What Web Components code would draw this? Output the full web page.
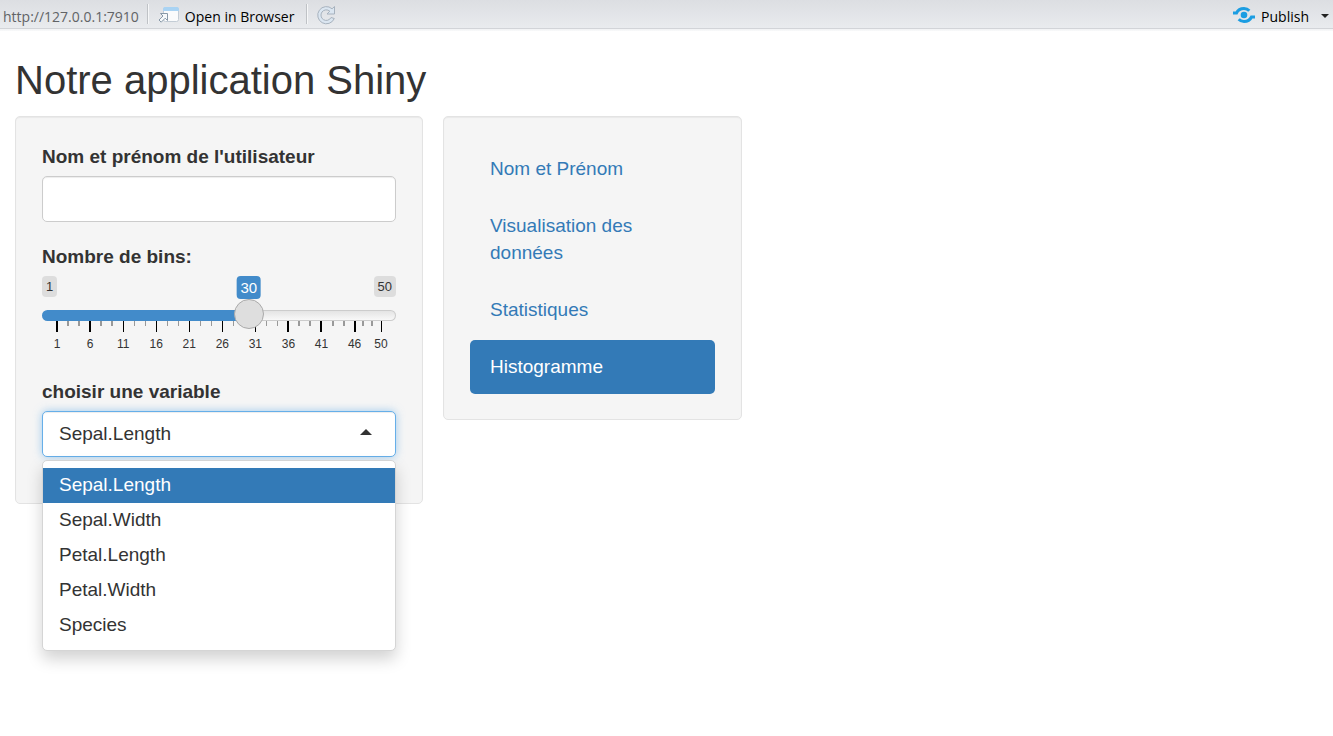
<!DOCTYPE html>
<html lang="fr">
<head>
<meta charset="utf-8">
<meta name="viewport" content="width=device-width, initial-scale=1">
<title>Notre application Shiny</title>
<style>
  html { min-height: 100%; }
  body { margin: 0; background: #fff; color: #333; font: 19px/27px "Liberation Sans", Arial, sans-serif; }
</style>
</head>
<body>
<shiny-app></shiny-app>

<script>
const define = (name, html, setup) => {
  const template = document.createElement('template');
  template.innerHTML = html;
  customElements.define(name, class extends HTMLElement {
    constructor() {
      super();
      this.attachShadow({ mode: 'open' }).append(template.content.cloneNode(true));
    }
    connectedCallback() { if (setup) setup(this, this.shadowRoot); }
  });
};

/* Viewer toolbar with address, browser, reload and publish actions */
define('viewer-toolbar', `
  <style>
    :host { display: flex; align-items: center; box-sizing: border-box; height: 31px; padding: 2px 4px 0 3px;
      background: linear-gradient(#dcdee2, #e9ebee 28px, #d2d4d8 28px, #d2d4d8 29px, #f1f2f4 29px, #f8f9fa);
      font: 14px/20px "Open Sans", "Noto Sans", sans-serif; color: #000; }
    .url { color: #616366; }
    i { width: 1px; height: 20px; margin: 0 9px 5px 8px; background: #bfc2c6; border-right: 1px solid #f6f7f8; }
    i.second { margin: 0 8px 5px 12px; }
    button { display: flex; align-items: center; gap: 6px; padding: 0; border: 0; background: none; font: inherit; color: inherit; }
    svg { display: block; margin-bottom: 3px; }
    .publish { margin-left: auto; }
    .publish .caret { margin: 0 0 0 6px; }
  </style>
  <span class="url">http://127.0.0.1:7910</span>
  <i></i>
  <button type="button">
    <svg width="21" height="18" viewBox="0 0 21 18" aria-hidden="true">
      <rect x="5.500" y="1.500" width="15" height="14" rx="2" fill="#fafbfc" stroke="#c3ccd5"/>
      <path d="M5 5V3q0-2 2-2h12q2 0 2 2v2z" fill="#a9d3f3"/>
      <path d="M2.500 7.500h7v7l-2.300-2.300-4 4-2.200-2.200 4-4z" fill="#f5f8fa" stroke="#8798a8"/>
    </svg>
    Open in Browser
  </button>
  <i class="second"></i>
  <button type="button" aria-label="Reload">
    <svg width="20" height="20" viewBox="0 0 20 20" aria-hidden="true">
      <path d="M18.500 1.500v7.500h-7.500l2.800-2.800a5.300 5.300 0 1 0 1.200 6.300l3.300 1a8.600 8.600 0 1 1-2.200-9.700z" fill="#dbe6f1" stroke="#a7b2be" stroke-linejoin="round"/>
    </svg>
  </button>
  <button type="button" class="publish">
    <svg width="22" height="18" viewBox="0 0 22 18" fill="none" stroke="#1b9de2" stroke-width="3" aria-hidden="true">
      <circle cx="11" cy="9" r="3.300" fill="#1b9de2" stroke="none"/>
      <path d="M0 7h3.500C5 3.800 7.800 2.500 11 2.500c2.200 0 4 .8 5.300 2.200"/>
      <path d="M22 11h-3.500C17 14.200 14.200 15.500 11 15.500c-2.200 0-4-.8-5.300-2.200"/>
    </svg>
    Publish
    <svg class="caret" width="8" height="5" viewBox="0 0 8 5" aria-hidden="true"><path d="M0 0h8L4 4z" fill="#222"/></svg>
  </button>
`);

/* Grey bordered panel */
define('well-panel', `
  <style>
    :host { display: block; box-sizing: border-box; padding: 26px; border: 1px solid #e3e3e3; border-radius: 5px;
      background: #f5f5f5; box-shadow: inset 0 1px 1px rgba(0,0,0,.05); }
  </style>
  <slot></slot>
`);

define('text-field', `
  <style>
    :host { display: block; }
    label { display: block; margin-bottom: 6px; font-weight: bold; }
    input { display: block; box-sizing: border-box; width: 100%; height: 46px; padding: 8px 16px; border: 1px solid #ccc;
      border-radius: 5px; background: #fff; box-shadow: inset 0 1px 1px rgba(0,0,0,.075); font: inherit; color: #555; }
  </style>
  <label for="field"><slot></slot></label>
  <input id="field" type="text">
`);

/* Range slider with value bubble and tick scale */
define('bins-slider', `
  <style>
    :host { display: block; }
    label { display: block; margin-bottom: 6px; font-weight: bold; }
    .values { position: relative; display: flex; justify-content: space-between; height: 23px; }
    .values span { box-sizing: border-box; height: 21px; padding: 0 4px; border-radius: 4px; background: #ddd; font-size: 13px; line-height: 21px; }
    .values .now { position: absolute; left: calc(15px + (100% - 30px) * 29 / 49); transform: translateX(-50%);
      height: 23px; background: #428bca; color: #fff; font-size: 15px; line-height: 23px; }
    input { display: block; position: relative; width: 100%; height: 30px; margin: 0; appearance: none; background: none; }
    input::-webkit-slider-runnable-track { box-sizing: border-box; height: 11px; margin-top: 3px; border: 1px solid transparent; border-radius: 8px;
      background: linear-gradient(90deg, #428bca 58%, transparent 58%) border-box, linear-gradient(#e4e4e4, #f8f8f8) padding-box, linear-gradient(#ccc, #ccc) border-box; }
    input::-webkit-slider-thumb { appearance: none; box-sizing: border-box; width: 30px; height: 30px; margin-top: -12px; border: 1px solid #aaa;
      border-radius: 50%; background: #dedede; }
    .scale { padding: 0 15px 5px; margin-top: -8px; }
    svg { display: block; width: 100%; height: 11px; overflow: visible; }
    .labels { display: grid; grid-template-columns: repeat(9, 5fr) 4fr 0; margin-top: 4px; font-size: 12px; line-height: 16px; }
    .labels span { display: flex; justify-content: center; width: 0; }
  </style>
  <label for="range"><slot></slot></label>
  <div class="values"><span>1</span><span class="now">30</span><span>50</span></div>
  <input id="range" type="range" min="1" max="50" value="30">
  <div class="scale">
    <svg shape-rendering="crispEdges" aria-hidden="true"></svg>
    <div class="labels"></div>
  </div>
`, (host, root) => {
  const marks = [1, 6, 11, 16, 21, 26, 31, 36, 41, 46, 50];
  const share = value => (value - 1) / 49 * 100;
  const bold = value => value < 11 || (value >= 36 && value < 50);
  const tick = (value, height, colour) => bold(value)
    ? `<rect x="${share(value)}%" width="2" height="${height}" fill="${colour}" transform="translate(-1 0)"/>`
    : `<rect x="${share(value)}%" width="1" height="${height}" fill="${colour}"/>`;
  root.querySelector('svg').innerHTML = marks.map((mark, i) => {
    const step = ((marks[i + 1] || mark) - mark) / 3;
    return tick(mark, 11, '#000') + (step ? tick(mark + step, 5, '#999') + tick(mark + 2 * step, 5, '#999') : '');
  }).join('');
  root.querySelector('.labels').innerHTML = marks.map(mark => `<span>${mark}</span>`).join('');
});

/* Drop-down with its option list unfolded */
define('variable-select', `
  <style>
    :host { display: block; }
    label { display: block; margin-bottom: 6px; font-weight: bold; }
    .box { position: relative; }
    select { display: block; appearance: none; box-sizing: border-box; width: 100%; height: 46px; padding: 0 16px 2px; border: 1px solid #66afe9;
      border-radius: 5px; background: #fff; color: #333; font: inherit; outline: 0;
      box-shadow: inset 0 1px 1px rgba(0,0,0,.075), 0 0 8px rgba(102,175,233,.6); }
    svg { position: absolute; right: 24px; top: 18px; pointer-events: none; }
    ul { position: absolute; z-index: 1; top: 100%; left: 0; right: 0; margin: 3px 0 0; padding: 7px 0; list-style: none; border: 1px solid #d5d5d5;
      border-radius: 5px; background: #fff; box-shadow: 0 8px 16px rgba(0,0,0,.18); }
    li { padding: 3px 16px 5px; }
    li[aria-selected="true"] { background: #337ab7; color: #fff; }
  </style>
  <label for="variable"><slot></slot></label>
  <div class="box">
    <select id="variable"></select>
    <svg width="12" height="6" viewBox="0 0 12 6" aria-hidden="true"><path d="M0 6L6 0l6 6z" fill="#333"/></svg>
    <ul role="listbox" aria-label="choisir une variable"></ul>
  </div>
`, (host, root) => {
  const names = ['Sepal.Length', 'Sepal.Width', 'Petal.Length', 'Petal.Width', 'Species'];
  root.querySelector('select').innerHTML = names.map(name => `<option>${name}</option>`).join('');
  root.querySelector('ul').innerHTML = names.map((name, i) => `<li role="option" aria-selected="${i === 0}">${name}</li>`).join('');
});

define('pill-link', `
  <style>
    :host { display: block; }
    a { display: block; padding: 13px 20px 14px; border-radius: 5px; color: #337ab7; text-decoration: none; }
    :host([active]) a { background: #337ab7; color: #fff; }
  </style>
  <a href="#"><slot></slot></a>
`);

define('shiny-app', `
  <style>
    :host { display: block; min-height: 100vh; }
    h1 { margin: 0; padding: 28px 15px 14px; font-size: 40px; font-weight: 500; line-height: 43px; }
    main { display: grid; grid-template-columns: 408fr 299fr 556fr; gap: 20px; align-items: start; padding: 0 15px; }
    form { display: grid; gap: 21px; margin-bottom: 20px; }
    nav { display: grid; gap: 3px; margin: -1px 0; }
  </style>
  <viewer-toolbar></viewer-toolbar>
  <h1>Notre application Shiny</h1>
  <main>
    <well-panel>
      <form>
        <text-field>Nom et prénom de l'utilisateur</text-field>
        <bins-slider>Nombre de bins:</bins-slider>
        <variable-select>choisir une variable</variable-select>
      </form>
    </well-panel>
    <well-panel>
      <nav>
        <pill-link>Nom et Prénom</pill-link>
        <pill-link>Visualisation des données</pill-link>
        <pill-link>Statistiques</pill-link>
        <pill-link active>Histogramme</pill-link>
      </nav>
    </well-panel>
  </main>
`);
</script>
</body>
</html>
